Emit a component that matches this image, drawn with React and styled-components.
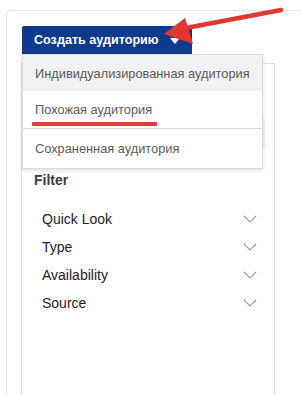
import React from 'react';
import styled, { createGlobalStyle } from 'styled-components';

const GlobalStyle = createGlobalStyle`
  html, body {
    margin: 0;
    padding: 0;
    background: #ffffff;
    overflow: hidden;
    font-family: "Liberation Sans", Arial, sans-serif;
  }
`;

const Page = styled.div`
  position: relative;
  width: 301px;
  height: 395px;
  overflow: hidden;
  padding: 10px 0 0 6px;
  box-sizing: border-box;
`;

const Card = styled.div`
  width: 330px;
  height: 420px;
  border: 1px solid #e2e2e2;
  border-radius: 5px;
  padding: 15px 0 0 15px;
  box-sizing: border-box;
`;

const ButtonWrap = styled.div`
  position: relative;
  width: 170px;
`;

const CreateButton = styled.button`
  display: flex;
  align-items: center;
  gap: 11px;
  width: 170px;
  height: 28px;
  padding: 0 0 0 12px;
  border: none;
  border-radius: 2px 2px 0 0;
  background: #0d3a8a;
  color: #ffffff;
  font-family: "Liberation Sans", Arial, sans-serif;
  font-size: 12.6px;
  font-weight: 700;
  cursor: pointer;
`;

const Caret = styled.span`
  width: 0;
  height: 0;
  border-left: 5px solid transparent;
  border-right: 5px solid transparent;
  border-top: 6px solid #ffffff;
  margin-top: 2px;
`;

const Menu = styled.div`
  position: absolute;
  top: 28px;
  left: 0;
  width: 239px;
  background: #ffffff;
  border: 1px solid #dcdcdc;
  box-shadow: 0 2px 4px rgba(0, 0, 0, 0.12);
  z-index: 5;
`;

const MenuItem = styled.div`
  position: relative;
  height: ${(p) => p.h}px;
  display: flex;
  align-items: center;
  padding-left: 12px;
  font-size: 12.8px;
  color: #5b5b5b;
  background: ${(p) => (p.active ? '#f1f1f3' : '#ffffff')};
  border-top: ${(p) => (p.divider ? '1px solid #dcdcdc' : 'none')};
`;

const Underline = styled.div`
  position: absolute;
  left: 9px;
  top: 31px;
  width: 125px;
  height: 4px;
  background: #e53a35;
  border-radius: 1px;
`;

const Panel = styled.div`
  width: 254px;
  height: 360px;
  margin-top: 9px;
  margin-left: -1px;
  border: 1px solid #dedede;
  padding: 14px 0 0 12px;
  box-sizing: border-box;
`;

const FakeInput = styled.div`
  width: 228px;
  height: 25px;
  border: 1px solid #cfcfcf;
  border-radius: 4px;
  box-sizing: border-box;
`;

const BlueBox = styled.div`
  width: 231px;
  height: 30px;
  margin-top: 15px;
  background: #e8f0fb;
  border-radius: 4px;
`;

const FilterTitle = styled.div`
  margin-top: 24px;
  font-size: 14px;
  font-weight: 700;
  color: #3c3c3c;
`;

const FilterList = styled.div`
  margin-top: 17px;
  padding-left: 8px;
  width: 215px;
  display: flex;
  flex-direction: column;
`;

const FilterRow = styled.div`
  height: 28px;
  display: flex;
  align-items: center;
  justify-content: space-between;
  font-size: 14px;
  color: #222222;
`;

const Chevron = () => (
  <svg width="14" height="8" viewBox="0 0 14 8">
    <path d="M1 1 L7 7 L13 1" fill="none" stroke="#9a9a9a" strokeWidth="1.1" />
  </svg>
);

const Arrow = styled.svg`
  position: absolute;
  left: 0;
  top: 0;
  pointer-events: none;
  z-index: 10;
`;

const filters = ['Quick Look', 'Type', 'Availability', 'Source'];

export default function App() {
  return (
    <>
      <GlobalStyle />
      <Page>
        <Card>
          <ButtonWrap>
            <CreateButton>
              Создать аудиторию
              <Caret />
            </CreateButton>
            <Menu>
              <MenuItem h={36} active>
                Индивидуализированная аудитория
              </MenuItem>
              <MenuItem h={37}>
                Похожая аудитория
                <Underline />
              </MenuItem>
              <MenuItem h={39} divider>
                Сохраненная аудитория
              </MenuItem>
            </Menu>
          </ButtonWrap>
          <Panel>
            <FakeInput />
            <BlueBox />
            <FilterTitle>Filter</FilterTitle>
            <FilterList>
              {filters.map((f) => (
                <FilterRow key={f}>
                  {f}
                  <Chevron />
                </FilterRow>
              ))}
            </FilterList>
          </Panel>
        </Card>
        <Arrow width="301" height="395" viewBox="0 0 301 395">
          <line x1="281" y1="10" x2="186" y2="28" stroke="#e5352f" strokeWidth="4.5" strokeLinecap="round" />
          <polygon points="164,34 185,18 193,44" fill="#e5352f" />
        </Arrow>
      </Page>
    </>
  );
}
